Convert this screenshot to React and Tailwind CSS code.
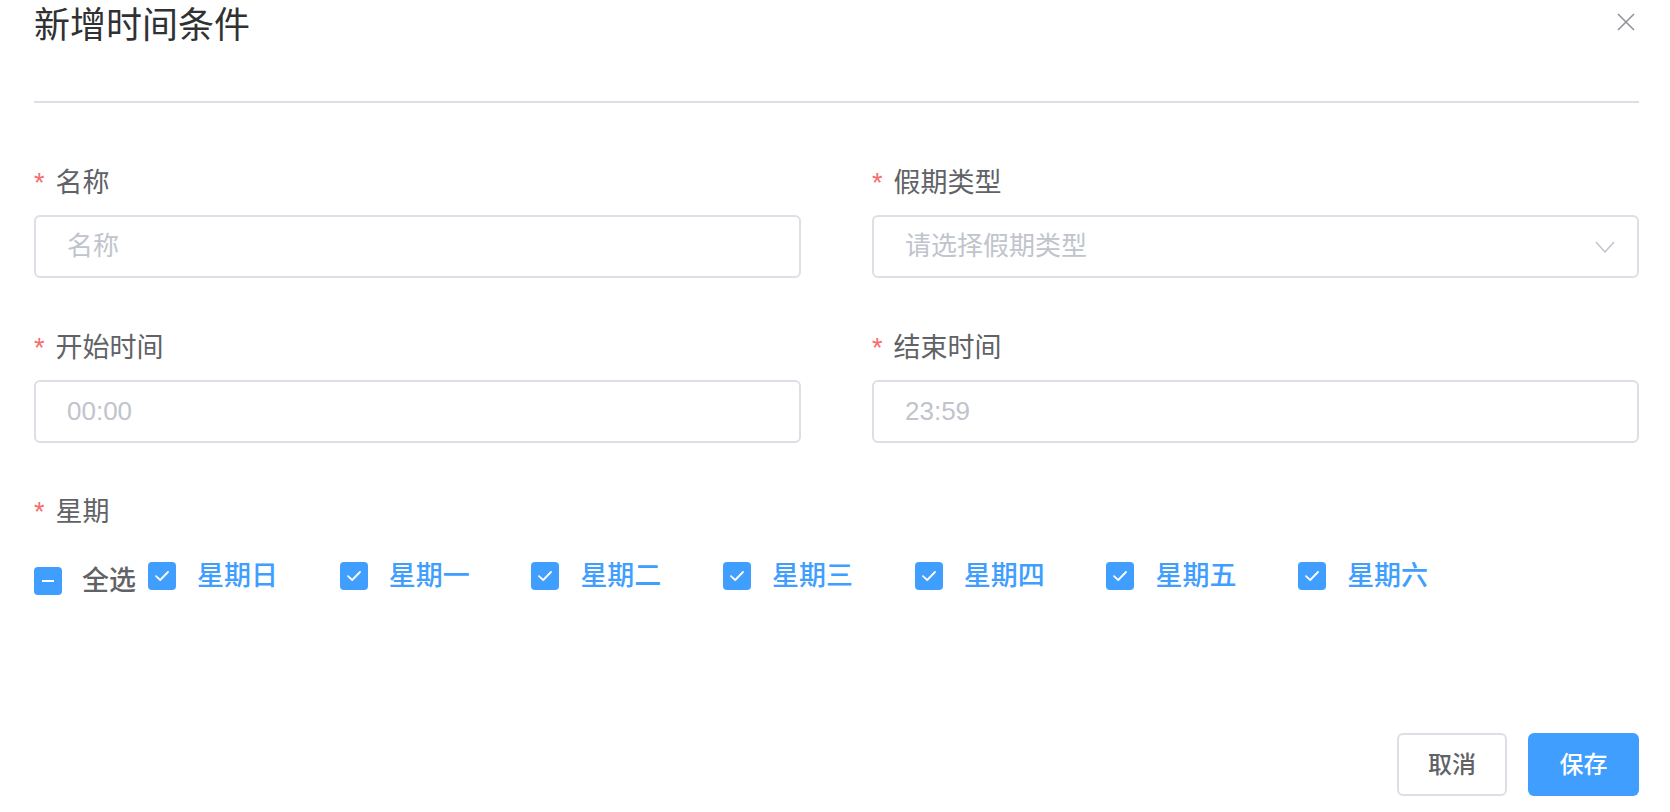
import React, { useState } from 'react';

const DAYS = ['星期日', '星期一', '星期二', '星期三', '星期四', '星期五', '星期六'];

const Label = ({ children }) => (
    <div className="flex items-center h-[40px] leading-[40px] text-[27px] text-[#606266]">
        <span className="text-[#f56c6c] mr-[11px]">*</span>
        <span>{children}</span>
    </div>
);

const Check = ({ indeterminate }) => (
    <span className="w-[28px] h-[28px] rounded-[4px] bg-[#409eff] flex items-center justify-center shrink-0">
        {indeterminate ? (
            <span className="w-[12px] h-[2px] bg-white" />
        ) : (
            <svg width="18" height="14" viewBox="0 0 18 14" fill="none">
                <path d="M3 7.2 L7.2 11 L15 3" stroke="white" strokeWidth="1.8" strokeLinecap="round" strokeLinejoin="round" />
            </svg>
        )}
    </span>
);

const App = () => {
    const [name, setName] = useState('');

    return (
        <div className="w-[1670px] h-[812px] bg-white flex flex-col pl-[34px] pr-[31px] font-['Liberation_Sans','Noto_Sans_CJK_SC',sans-serif]">
            {/* Header */}
            <div className="h-[103px] border-b-2 border-[#dcdfe6] flex justify-between items-start">
                <h2 className="text-[36px] leading-[52px] text-[#303133] font-normal">新增时间条件</h2>
                <svg className="mt-[13px] mr-[4px]" width="18" height="18" viewBox="0 0 18 18" fill="none">
                    <path d="M1 1 L17 17 M17 1 L1 17" stroke="#909399" strokeWidth="1.6" />
                </svg>
            </div>

            {/* Form */}
            <div className="grid grid-cols-2 gap-x-[71px] gap-y-[50px] mt-[60px]">
                <div>
                    <Label>名称</Label>
                    <input
                        value={name}
                        onChange={(e) => setName(e.target.value)}
                        placeholder="名称"
                        className="mt-[12px] w-full h-[63px] border-2 border-[#dcdfe6] rounded-[6px] pl-[31px] text-[26px] text-[#606266] placeholder:text-[#c0c4cc] outline-none"
                    />
                </div>
                <div>
                    <Label>假期类型</Label>
                    <div className="mt-[12px] w-full h-[63px] border-2 border-[#dcdfe6] rounded-[6px] pl-[31px] pr-[22px] flex items-center justify-between">
                        <span className="text-[26px] text-[#c0c4cc]">请选择假期类型</span>
                        <svg width="20" height="12" viewBox="0 0 20 12" fill="none">
                            <path d="M1 1 L10 11 L19 1" stroke="#c0c4cc" strokeWidth="1.5" />
                        </svg>
                    </div>
                </div>
                <div>
                    <Label>开始时间</Label>
                    <input
                        placeholder="00:00"
                        className="mt-[12px] w-full h-[63px] border-2 border-[#dcdfe6] rounded-[6px] pl-[31px] text-[26px] text-[#606266] placeholder:text-[#c0c4cc] outline-none"
                    />
                </div>
                <div>
                    <Label>结束时间</Label>
                    <input
                        placeholder="23:59"
                        className="mt-[12px] w-full h-[63px] border-2 border-[#dcdfe6] rounded-[6px] pl-[31px] text-[26px] text-[#606266] placeholder:text-[#c0c4cc] outline-none"
                    />
                </div>
            </div>

            {/* Weekdays */}
            <div className="mt-[49px]">
                <Label>星期</Label>
                <div className="flex items-start mt-[30px]">
                    <label className="w-[114px] shrink-0 flex items-center mt-[5px]">
                        <Check indeterminate />
                        <span className="ml-[20px] text-[27px] leading-[28px] text-[#606266] font-medium">全选</span>
                    </label>
                    {DAYS.map(d => (
                        <label key={d} className="w-[191.7px] shrink-0 flex items-center">
                            <Check />
                            <span className="ml-[21px] text-[27px] leading-[28px] text-[#409eff] font-medium">{d}</span>
                        </label>
                    ))}
                </div>
            </div>

            {/* Footer */}
            <div className="mt-auto pb-[16px] flex justify-end gap-[21px]">
                <button className="w-[110px] h-[63px] border-2 border-[#dcdfe6] rounded-[6px] bg-white text-[24px] text-[#606266] font-medium">取消</button>
                <button className="w-[111px] h-[63px] rounded-[6px] bg-[#409eff] text-[24px] text-white font-medium">保存</button>
            </div>
        </div>
    );
};

export default App;
